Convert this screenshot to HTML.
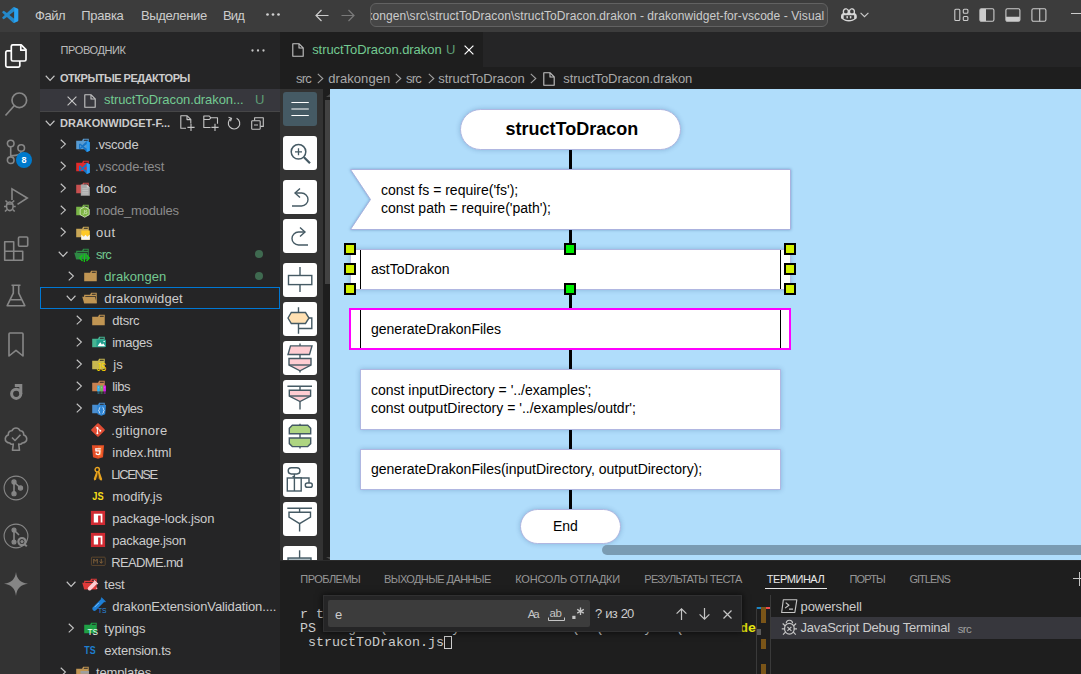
<!DOCTYPE html>
<html lang="ru">
<head>
<meta charset="utf-8">
<title>structToDracon.drakon - drakonwidget-for-vscode - Visual Studio Code</title>
<style>
*{box-sizing:border-box;margin:0;padding:0}
html,body{width:1081px;height:674px;overflow:hidden;background:#1e1e1e}
body{position:relative;font-family:"Liberation Sans",sans-serif;font-size:13px;color:#cccccc}
.abs{position:absolute}
.t{position:absolute;white-space:nowrap}
svg{position:absolute;overflow:visible}
#titlebar{left:0;top:0;width:1081px;height:32px;background:#3c3c3c;overflow:hidden}
#cmd{left:370px;top:3px;width:458px;height:24px;border:1px solid #626262;border-radius:6px;background:#464646;overflow:hidden}
#activity{left:0;top:32px;width:40px;height:642px;background:#333333}
#activity svg{fill:none;stroke:#878787}
#sidebar{left:40px;top:32px;width:240px;height:642px;background:#252526;overflow:hidden}
#tabs{left:280px;top:32px;width:801px;height:35px;background:#252526}
#tab{left:0;top:0;width:203px;height:35px;background:#1e1e1e}
#crumbs{left:280px;top:67px;width:801px;height:22px;background:#1e1e1e}
#toolbar{left:280px;top:89px;width:43px;height:471px;background:#333333;overflow:hidden}
.tb{position:absolute;left:3px;width:34px;height:34px;background:#ffffff;border-radius:3px}
.tb svg{left:0;top:0;fill:none;stroke:#455a64;stroke-width:1.4}
#vscroll{left:323px;top:89px;width:7px;height:471px;background:#1e1e1e}
#canvas{left:330px;top:89px;width:751px;height:471px;background:#b0ddfb;overflow:hidden}
.box{position:absolute;background:#fff;border:1px solid #b0b7e1;box-shadow:0 0 5px rgba(0,50,110,.24)}
.vl{position:absolute;background:#000;width:3px;left:239px}
.h{position:absolute;width:12px;height:12px;border:2px solid #000;background:#d2f000}
.hg{background:#00f000}
#panel{left:280px;top:560px;width:801px;height:114px;background:#1e1e1e;overflow:hidden}
.mono{font-family:"Liberation Mono",monospace}
</style>
</head>
<body>
<div id="titlebar" class="abs">
<svg style="left:2px;top:6.900px" width="16.400" height="16" viewBox="0 0 100 100"><path d="M96.500 10.800 75.900.9a6.200 6.200 0 0 0-7.100 1.200L29.400 38 12.200 25a4.200 4.200 0 0 0-5.300.2L1.400 30.200a4.200 4.200 0 0 0 0 6.200L16.300 50 1.400 63.600a4.200 4.200 0 0 0 0 6.200l5.500 5a4.200 4.200 0 0 0 5.300.2L29.400 62l39.400 35.900a6.200 6.200 0 0 0 7.100 1.200l20.600-9.900A6.200 6.200 0 0 0 100 83.600V16.400a6.200 6.200 0 0 0-3.500-5.600zM75 72.700 45.100 50 75 27.300z" fill="#2489ca"/><path d="M75.900.9 96.500 10.800A6.200 6.200 0 0 1 100 16.400V83.600a6.200 6.200 0 0 1-3.500 5.600L75.900 99.100A6.200 6.200 0 0 1 75 99z" fill="#29a3f2"/></svg>
<span class="t" style="left:35px;top:4.5px;line-height:22px;font-size:13px;color:#cccccc;letter-spacing:-0.458px;">Файл</span>
<span class="t" style="left:81.3px;top:4.5px;line-height:22px;font-size:13px;color:#cccccc;letter-spacing:-0.277px;">Правка</span>
<span class="t" style="left:141px;top:4.5px;line-height:22px;font-size:13px;color:#cccccc;letter-spacing:-0.332px;">Выделение</span>
<span class="t" style="left:223px;top:4.5px;line-height:22px;font-size:13px;color:#cccccc;letter-spacing:-0.816px;">Вид</span>
<svg style="left:265.500px;top:12.800px" width="14" height="3" viewBox="0 0 14 3"><circle cx="1.500" cy="1.500" r="1.350" fill="#d0d0d0"/><circle cx="7" cy="1.500" r="1.350" fill="#d0d0d0"/><circle cx="12.500" cy="1.500" r="1.350" fill="#d0d0d0"/></svg>
<svg style="left:315px;top:9px" width="14" height="13" viewBox="0 0 14 13" fill="none" stroke="#cccccc" stroke-width="1.2"><path d="M13.5 6.5H1.2M6.5 1 1 6.5 6.5 12"/></svg>
<svg style="left:341px;top:9px" width="14" height="13" viewBox="0 0 14 13" fill="none" stroke="#7a7a7a" stroke-width="1.2"><path d="M0.5 6.5h12.3M7.5 1 13 6.5 7.5 12"/></svg>
<div id="cmd" class="abs">
<span class="t" style="left:-4.6px;top:0.7px;line-height:22px;font-size:12px;color:#cccccc;letter-spacing:0.07px;">kongen\src\structToDracon\structToDracon.drakon - drakonwidget-for-vscode - Visual Studio Code</span>
</div>
<svg style="left:839.600px;top:7.300px" width="17.800" height="15.200" viewBox="0 0 16 14" preserveAspectRatio="none"><path d="M3 2.2C3.8 1 5.6 0.9 6.6 1.5 7.3 1.9 7.6 2.6 8 2.6s.7-.7 1.4-1.1c1-.6 2.8-.5 3.6.7.7 1 .6 2.300.4 3.300 1 .7 1.700 1.700 1.700 2.800v1.500c0 .4-.2.800-.5 1C12.700 12.200 10.500 13.300 8 13.300S3.300 12.200 1.400 10.800c-.3-.2-.5-.6-.5-1V8.300c0-1.100.7-2.100 1.700-2.800C2.400 4.500 2.300 3.200 3 2.200z" fill="#d7d7d7"/><path d="M3.300 7.500h9.400v3.300c-1.300.7-3 1.200-4.700 1.200s-3.400-.5-4.700-1.200z" fill="#3c3c3c"/><rect x="5.800" y="8.200" width="1.300" height="2.300" rx=".6" fill="#d7d7d7"/><rect x="8.900" y="8.200" width="1.300" height="2.300" rx=".6" fill="#d7d7d7"/><path d="M4 2.900c.5-.7 1.700-.7 2.300-.3.500.4.700 1.200.600 2-.1.800-.7 1.200-1.600 1.200-1 0-1.500-.3-1.600-1-.1-.700 0-1.400.3-1.900zM12 2.900c-.5-.7-1.700-.7-2.300-.3-.5.4-.7 1.200-.6 2 .1.800.7 1.200 1.600 1.200 1 0 1.500-.3 1.600-1 .1-.700 0-1.400-.3-1.900z" fill="#3c3c3c"/></svg>
<svg style="left:860px;top:12.300px" width="9" height="6" viewBox="0 0 9 6" fill="none" stroke="#cccccc" stroke-width="1.1"><path d="M0.600.8 4.500 4.700 8.400.8"/></svg>
<svg style="left:954px;top:8px" width="15" height="14" viewBox="0 0 15 14" fill="none" stroke="#cccccc" stroke-width="1.1"><rect x=".8" y="1.200" width="5" height="11.300" rx="1"/><rect x="9.300" y="1.200" width="4.600" height="4" rx="1"/><rect x="9.300" y="8.500" width="4.600" height="4" rx="1"/></svg>
<svg style="left:979px;top:8px" width="16" height="14" viewBox="0 0 16 14"><rect x=".9" y=".8" width="14" height="12.400" rx="1.500" fill="none" stroke="#cccccc" stroke-width="1.1"/><path d="M1 2.300a1.400 1.400 0 0 1 1.400-1.400H7v12.200H2.400A1.400 1.400 0 0 1 1 11.700z" fill="#cccccc"/></svg>
<svg style="left:1005px;top:8px" width="16" height="14" viewBox="0 0 16 14"><rect x=".9" y=".8" width="14" height="12.400" rx="1.500" fill="none" stroke="#cccccc" stroke-width="1.1"/><path d="M1 8.800h13.800v2.900a1.400 1.400 0 0 1-1.400 1.400H2.400A1.400 1.400 0 0 1 1 11.700z" fill="#cccccc"/></svg>
<svg style="left:1031px;top:8px" width="16" height="14" viewBox="0 0 16 14" fill="none" stroke="#cccccc" stroke-width="1.1"><rect x=".9" y=".8" width="14" height="12.400" rx="1.500"/><path d="M8.700.8v12.400"/></svg>
<div class="abs" style="left:1071px;top:13px;width:10px;height:1px;background:#cccccc"></div>
</div>
<div id="activity" class="abs">
<svg style="left:4px;top:11px" width="24" height="26" viewBox="0 0 24 26" stroke-width="1.700" stroke-linejoin="round"><path d="M8.800 1.800h8.400l4.800 4.800V16.500a1.500 1.500 0 0 1-1.500 1.500H8.800a1.500 1.500 0 0 1-1.500-1.500V3.300a1.500 1.500 0 0 1 1.500-1.500z" style="stroke:#fff"/><path d="M16.800 2.200v5h5" style="stroke:#fff"/><path d="M7.300 7.900H3.300a1.500 1.500 0 0 0-1.500 1.500v13.200a1.500 1.500 0 0 0 1.500 1.500h11a1.500 1.500 0 0 0 1.500-1.500V18" style="stroke:#fff"/></svg>
<svg style="left:4px;top:59px" width="25" height="26" viewBox="0 0 25 26" stroke-width="1.700"><circle cx="15.300" cy="9.300" r="7.300"/><path d="M10.200 14.800 1.500 24.500"/></svg>
<svg style="left:4px;top:104px" width="28" height="28" viewBox="0 0 28 28" stroke-width="1.600"><circle cx="6.700" cy="7.500" r="3.300"/><circle cx="17.200" cy="12" r="3.300"/><circle cx="6.700" cy="24.200" r="3.300"/><path d="M6.700 10.800v10.100M17.200 15.300c0 3.500-4 4-10.500 4.500"/></svg>
<div class="abs" style="left:16px;top:120px;width:16px;height:16px;border-radius:8px;background:#007acc"></div>
<span class="t" style="left:21.5px;top:120.3px;line-height:16px;font-size:9px;color:#ffffff;font-weight:bold;">8</span>
<svg style="left:3px;top:155px" width="26" height="26" viewBox="0 0 26 26" stroke-width="1.600"><path d="M9 13V1.800L24.300 11 14.500 17.300"/><ellipse cx="6.800" cy="19.300" rx="3.300" ry="4.300"/><path d="M3.500 17h6.600M4.500 15.500 2.500 13.500M9.200 15.500l2-2M3.500 19.500H1M10.200 19.500h2.500M4 22.500 2 24.500M9.700 22.500l2 2"/></svg>
<svg style="left:3px;top:203px" width="26" height="26" viewBox="0 0 26 26" stroke-width="1.600" stroke-linejoin="round"><path d="M1.700 6.700h9v9.500h9v9H1.700zM1.700 16.200h9M10.700 16.200v9"/><rect x="15.500" y="2" width="9.200" height="9.200" rx="1"/></svg>
<svg style="left:6px;top:252px" width="20" height="23" viewBox="0 0 20 23" stroke-width="1.600" stroke-linejoin="round"><path d="M5.500 1.200h9M7.300 1.200v8L1.200 21.700h17.600L12.700 9.200v-8M4.200 15.700h11.600"/></svg>
<svg style="left:8px;top:300px" width="16" height="25" viewBox="0 0 16 25" stroke-width="1.600" stroke-linejoin="round"><path d="M1 2a1 1 0 0 1 1-1h12a1 1 0 0 1 1 1v22L8 18.300 1 24z"/></svg>
<svg style="left:9px;top:351px" width="14" height="18" viewBox="0 0 14 18" stroke-width="3"><path d="M5.800 2.400h7.500M11.800 1v10" stroke-linecap="butt"/><circle cx="7.200" cy="10.800" r="4.600"/></svg>
<svg style="left:4px;top:395px" width="24" height="25" viewBox="0 0 24 25" stroke-width="1.600" stroke-linejoin="round"><path d="M9.300 17c-1 .6-2.800.3-3.500-1C3 16 1 14 1.300 11.500 1.500 9.500 3 8.300 4.300 8 4 5 6 3.500 8 3.700 9 1.500 11 1 12 1s3 .5 4 2.700c2-.2 4 1.300 3.700 4.300 1.300.3 2.800 1.500 3 3.500.3 2.500-1.700 4.500-4.500 4.500-.7 1.300-2.500 1.600-3.500 1l.8 6.300H8.500z"/><path d="M8 10.500l3 3 5.500-5.800"/></svg>
<svg style="left:3px;top:443px" width="26" height="26" viewBox="0 0 26 26" stroke-width="1.100"><circle cx="13" cy="13" r="11.900"/><g fill="#858585"><circle cx="11" cy="7" r="2.100"/><circle cx="17.500" cy="13" r="2.100"/><circle cx="11" cy="18.700" r="2.100"/></g><path d="M11 7v11.700M11 7l6.500 6" stroke-width="1.600"/></svg>
<svg style="left:3px;top:491px" width="26" height="26" viewBox="0 0 26 26" stroke-width="1.100"><circle cx="13" cy="13" r="11.900"/><g fill="#858585"><circle cx="11" cy="7" r="2"/><circle cx="11" cy="19" r="2"/></g><path d="M11 7v12M11 7l5 5" stroke-width="1.600"/><circle cx="19" cy="18.600" r="3.600" stroke-width="2.200" fill="#333"/><circle cx="19" cy="18.600" r="1.600" fill="#858585" stroke="none"/><path d="M21.800 21.400l2 2" stroke-width="2"/></svg>
<svg style="left:4px;top:540px" width="24" height="24" viewBox="0 0 24 24"><path d="M12 0c.8 7 4.500 11 12 11.700C16.500 12.500 12.800 16.500 12 24 11.200 16.500 7.500 12.500 0 11.700 7.500 11 11.200 7 12 0z" fill="#858585" stroke="none"/></svg>
</div>
<div id="sidebar" class="abs">
<span class="t" style="left:20.5px;top:7px;line-height:22px;font-size:11px;color:#bbbbbb;letter-spacing:-0.393px;">ПРОВОДНИК</span>
<svg style="left:211px;top:16.500px" width="14" height="3" viewBox="0 0 14 3"><circle cx="1.500" cy="1.500" r="1.150" fill="#c5c5c5"/><circle cx="7" cy="1.500" r="1.150" fill="#c5c5c5"/><circle cx="12.500" cy="1.500" r="1.150" fill="#c5c5c5"/></svg>
<svg style="left:5px;top:43px" width="10.200" height="6.500" viewBox="0 0 11 7" fill="none" stroke="#c5c5c5" stroke-width="1.200"><path d="M.8.800 5.500 5.800 10.200.8"/></svg>
<span class="t" style="left:20px;top:35px;line-height:22px;font-size:11px;color:#cccccc;font-weight:bold;letter-spacing:-0.486px;">ОТКРЫТЫЕ РЕДАКТОРЫ</span>
<div class="abs" style="left:0;top:57px;width:240px;height:22px;background:#37373d"></div>
<svg style="left:27px;top:63.500px" width="10" height="10" viewBox="0 0 10 10" fill="none" stroke="#c5c5c5" stroke-width="1.150"><path d="M.6.600l8.800 8.800M9.400.600.600 9.400"/></svg>
<svg style="left:43.5px;top:61.5px" width="12" height="14" viewBox="0 0 12 14" fill="none" stroke="#c5c5c5" stroke-width="1.100" stroke-linejoin="round"><path d="M.8.800h6.400l4 4v8.400H.8z"/><path d="M7 .9v4.100h4.100"/></svg>
<span class="t" style="left:64px;top:57px;line-height:22px;font-size:13px;color:#73c991;letter-spacing:-0.087px;">structToDracon.drakon...</span>
<span class="t" style="left:215px;top:57px;line-height:22px;font-size:13px;color:#5d9c74;letter-spacing:-1.000px;">U</span>
<div class="abs" style="left:0;top:79px;width:240px;height:1px;background:#464647"></div>
<svg style="left:5px;top:88px" width="10.200" height="6.500" viewBox="0 0 11 7" fill="none" stroke="#c5c5c5" stroke-width="1.200"><path d="M.8.800 5.500 5.800 10.200.8"/></svg>
<span class="t" style="left:20px;top:79.5px;line-height:22px;font-size:11px;color:#cccccc;font-weight:bold;letter-spacing:0.004px;">DRAKONWIDGET-F...</span>
<svg style="left:140px;top:83px" width="15" height="16" viewBox="0 0 15 16" fill="none" stroke="#c5c5c5" stroke-width="1.100" stroke-linejoin="round"><path d="M6 13.300H.8V.8h6.400l3.600 3.600v4"/><path d="M7 .9v3.700h3.700M11 8.800v7.200M7.400 12.400h7.200"/></svg>
<svg style="left:163px;top:83px" width="16" height="16" viewBox="0 0 16 16" fill="none" stroke="#c5c5c5" stroke-width="1.100" stroke-linejoin="round"><path d="M7.500 12.500H.8V1h5.500l1.500 1.800h6.700v6"/><path d="M.8 4.500h5.500l1.500-1.700M12 8.800v7.200M8.400 12.400h7.200"/></svg>
<svg style="left:186.700px;top:84px" width="14" height="14" viewBox="0 0 14 14" fill="none" stroke="#c5c5c5" stroke-width="1.150"><path d="M4.300 2.300A5.700 5.700 0 1 0 9.600 2.200"/><path d="M1.500 1.300l3 1-1 3"/></svg>
<svg style="left:211.300px;top:84.500px" width="13" height="13" viewBox="0 0 13 13" fill="none" stroke="#c5c5c5" stroke-width="1.100" stroke-linejoin="round"><rect x=".7" y="3.800" width="8.500" height="8.500" rx=".8"/><path d="M3.600 3.500V.7h8.700v8.700H9.500M3 8h4"/></svg>
<svg style="left:19.8px;top:107px" width="6.500" height="10.200" viewBox="0 0 7 11" fill="none" stroke="#c5c5c5" stroke-width="1.200"><path d="M.8.800 5.800 5.500.8 10.200"/></svg>
<svg style="left:34px;top:104px" width="16" height="16" viewBox="0 0 32 32"><path fill-rule="evenodd" d="M27.500 5.500H18.200L16.100 9.700H4.400V26.500H29.500V5.500zm0 4.200H19.300l1.100-2.200h7.100z" fill="#589bd2"/><g transform="translate(9.600 9.600) scale(.224)"><path d="M71 1 32 40 12 24 2 29v42l10 5 20-16 39 39 27-11V12zM12 62V38l13 12zm60 10L43 50l29-22z" fill="#1673c5"/><path d="M71 1l27 11v76L71 99z" fill="#2a9df4"/></g></svg>
<span class="t" style="left:55px;top:101.6px;line-height:22px;font-size:13px;color:#cccccc;letter-spacing:-0.195px;">.vscode</span>
<svg style="left:19.8px;top:129px" width="6.500" height="10.200" viewBox="0 0 7 11" fill="none" stroke="#c5c5c5" stroke-width="1.200"><path d="M.8.800 5.800 5.500.8 10.200"/></svg>
<svg style="left:34px;top:126px" width="16" height="16" viewBox="0 0 32 32"><path fill-rule="evenodd" d="M27.500 5.500H18.200L16.100 9.700H4.400V26.500H29.500V5.500zm0 4.200H19.300l1.100-2.200h7.100z" fill="#e02a2a"/><g transform="translate(9.600 9.600) scale(.224)"><path d="M71 1 32 40 12 24 2 29v42l10 5 20-16 39 39 27-11V12zM12 62V38l13 12zm60 10L43 50l29-22z" fill="#1673c5"/><path d="M71 1l27 11v76L71 99z" fill="#2a9df4"/></g></svg>
<span class="t" style="left:55px;top:123.6px;line-height:22px;font-size:13px;color:#8c8c8c;letter-spacing:-0.061px;">.vscode-test</span>
<svg style="left:19.8px;top:151px" width="6.500" height="10.200" viewBox="0 0 7 11" fill="none" stroke="#c5c5c5" stroke-width="1.200"><path d="M.8.800 5.800 5.500.8 10.200"/></svg>
<svg style="left:34px;top:148px" width="16" height="16" viewBox="0 0 32 32"><path fill-rule="evenodd" d="M27.500 5.500H18.200L16.100 9.700H4.400V26.500H29.500V5.500zm0 4.200H19.300l1.100-2.200h7.100z" fill="#c85050"/><path d="M13.600 8.800h12l6 6v16.800H13.600z" fill="#a9a9a9"/><path d="M25.600 8.800v6h6z" fill="#d0d0d0"/><path d="M16.500 17.500h12M16.500 21h12M16.500 24.500h12M16.500 28h12" stroke="#c9c9c9" stroke-width="1.500"/></svg>
<span class="t" style="left:56px;top:145.6px;line-height:22px;font-size:13px;color:#cccccc;letter-spacing:-0.230px;">doc</span>
<svg style="left:19.8px;top:173px" width="6.500" height="10.200" viewBox="0 0 7 11" fill="none" stroke="#c5c5c5" stroke-width="1.200"><path d="M.8.800 5.800 5.500.8 10.200"/></svg>
<svg style="left:34px;top:170px" width="16" height="16" viewBox="0 0 32 32"><path fill-rule="evenodd" d="M27.500 5.500H18.200L16.100 9.700H4.400V26.500H29.500V5.500zm0 4.200H19.300l1.100-2.200h7.100z" fill="#7ab648"/><path d="M21.400 9.500 30.500 14.700v10.600l-9.100 5.200-9.100-5.200V14.700z" fill="#7cb342" stroke="#e3f0d3" stroke-width="1.500"/><path d="M17.500 23.500c1 1.100 3.300 1 3.300-.8V16M26.300 17.600c-2.300-1.200-4.200.2-2.500 1.700 1.500 1 3.300 1.300 2.300 3.200-1 1.200-3 .8-3.800-.2" stroke="#e3f0d3" stroke-width="1.300" fill="none"/></svg>
<span class="t" style="left:56px;top:167.6px;line-height:22px;font-size:13px;color:#8c8c8c;letter-spacing:-0.208px;">node_modules</span>
<svg style="left:19.8px;top:195px" width="6.500" height="10.200" viewBox="0 0 7 11" fill="none" stroke="#c5c5c5" stroke-width="1.200"><path d="M.8.800 5.800 5.500.8 10.200"/></svg>
<svg style="left:34px;top:192px" width="16" height="16" viewBox="0 0 32 32"><path fill-rule="evenodd" d="M27.500 5.500H18.200L16.100 9.700H4.400V26.500H29.500V5.500zm0 4.200H19.300l1.100-2.200h7.100z" fill="#c8a656"/><path d="M14.600 13h17v18.500h-17z" fill="#ffca28"/><path d="M14.600 31.500V21l5 4.500 3.500-4 3.500 4 5-4.500v10.500z" fill="#f5f5f5"/></svg>
<span class="t" style="left:56px;top:189.6px;line-height:22px;font-size:13px;color:#cccccc;letter-spacing:0.520px;">out</span>
<svg style="left:17.7px;top:219.3px" width="10.200" height="6.500" viewBox="0 0 11 7" fill="none" stroke="#c5c5c5" stroke-width="1.200"><path d="M.8.800 5.500 5.800 10.200.8"/></svg>
<svg style="left:34px;top:214px" width="16" height="16" viewBox="0 0 32 32"><path fill-rule="evenodd" d="M27.400 5.500H18.200L16.100 9.700H4.300V26.500H29.500V5.500zm0 18.700H6.600V11.800H27.400zm0-14.500H19.200l1-2.100h7.200z" fill="#2f8a45"/><path d="M25.700 13.700H.5L4.300 26.500H29.500z" fill="#2f8a45"/><path d="M17 18 11.500 24l5.500 6M25 18l5.500 6-5.500 6M21.200 15.500l-.6 16.500" stroke="#14c814" stroke-width="2.500" fill="none"/></svg>
<span class="t" style="left:56px;top:211.6px;line-height:22px;font-size:13px;color:#73c991;letter-spacing:-0.815px;">src</span>
<div class="abs" style="left:215px;top:218px;width:8px;height:8px;border-radius:4px;background:#3f6a50"></div>
<svg style="left:27.8px;top:239px" width="6.500" height="10.200" viewBox="0 0 7 11" fill="none" stroke="#c5c5c5" stroke-width="1.200"><path d="M.8.800 5.800 5.500.8 10.200"/></svg>
<svg style="left:42px;top:236px" width="16" height="16" viewBox="0 0 32 32"><path fill-rule="evenodd" d="M27.500 5.500H18.200L16.100 9.700H4.400V26.500H29.500V5.500zm0 4.200H19.300l1.100-2.200h7.100z" fill="#c09553"/></svg>
<span class="t" style="left:64.3px;top:233.6px;line-height:22px;font-size:13px;color:#73c991;letter-spacing:0.061px;">drakongen</span>
<div class="abs" style="left:215px;top:240px;width:8px;height:8px;border-radius:4px;background:#3f6a50"></div>
<div class="abs" style="left:0;top:255px;width:240px;height:22px;border:1px solid #0078d4"></div>
<svg style="left:25.7px;top:263.3px" width="10.200" height="6.500" viewBox="0 0 11 7" fill="none" stroke="#c5c5c5" stroke-width="1.200"><path d="M.8.800 5.500 5.800 10.200.8"/></svg>
<svg style="left:42px;top:258px" width="16" height="16" viewBox="0 0 32 32"><path fill-rule="evenodd" d="M27.400 5.500H18.200L16.100 9.700H4.300V26.500H29.500V5.500zm0 18.700H6.600V11.800H27.400zm0-14.500H19.200l1-2.100h7.200z" fill="#c09553"/><path d="M25.700 13.700H.5L4.300 26.500H29.500z" fill="#c09553"/></svg>
<span class="t" style="left:64.3px;top:255.6px;line-height:22px;font-size:13px;color:#cccccc;letter-spacing:0.099px;">drakonwidget</span>
<svg style="left:35.8px;top:283px" width="6.500" height="10.200" viewBox="0 0 7 11" fill="none" stroke="#c5c5c5" stroke-width="1.200"><path d="M.8.800 5.800 5.500.8 10.200"/></svg>
<svg style="left:50px;top:280px" width="16" height="16" viewBox="0 0 32 32"><path fill-rule="evenodd" d="M27.500 5.500H18.200L16.100 9.700H4.400V26.500H29.500V5.500zm0 4.200H19.300l1.100-2.200h7.100z" fill="#c09553"/></svg>
<span class="t" style="left:72.3px;top:277.6px;line-height:22px;font-size:13px;color:#cccccc;letter-spacing:-0.218px;">dtsrc</span>
<svg style="left:35.8px;top:305px" width="6.500" height="10.200" viewBox="0 0 7 11" fill="none" stroke="#c5c5c5" stroke-width="1.200"><path d="M.8.800 5.800 5.500.8 10.200"/></svg>
<svg style="left:50px;top:302px" width="16" height="16" viewBox="0 0 32 32"><path fill-rule="evenodd" d="M27.500 5.500H18.200L16.100 9.700H4.400V26.500H29.500V5.500zm0 4.200H19.300l1.100-2.200h7.100z" fill="#45b592"/><rect x="13" y="11.500" width="19" height="14.500" fill="#1f9d8b"/><path d="M15 24.500 20.500 16.500l3.500 5 2.300-2.800 4.200 5.800z" fill="#ffffff"/><circle cx="28.300" cy="14.800" r="1.500" fill="#ffffff"/></svg>
<span class="t" style="left:72.3px;top:299.6px;line-height:22px;font-size:13px;color:#cccccc;letter-spacing:-0.361px;">images</span>
<svg style="left:35.8px;top:327px" width="6.500" height="10.200" viewBox="0 0 7 11" fill="none" stroke="#c5c5c5" stroke-width="1.200"><path d="M.8.800 5.800 5.500.8 10.200"/></svg>
<svg style="left:50px;top:324px" width="16" height="16" viewBox="0 0 32 32"><path fill-rule="evenodd" d="M27.500 5.500H18.200L16.100 9.700H4.400V26.500H29.500V5.500zm0 4.200H19.300l1.100-2.200h7.100z" fill="#c8b850"/><text x="13.500" y="30.500" font-family="Liberation Sans,sans-serif" font-size="20" fill="#ffd600" textLength="19" lengthAdjust="spacingAndGlyphs">JS</text></svg>
<span class="t" style="left:73.3px;top:321.6px;line-height:22px;font-size:13px;color:#cccccc;">js</span>
<svg style="left:35.8px;top:349px" width="6.500" height="10.200" viewBox="0 0 7 11" fill="none" stroke="#c5c5c5" stroke-width="1.200"><path d="M.8.800 5.800 5.500.8 10.200"/></svg>
<svg style="left:50px;top:346px" width="16" height="16" viewBox="0 0 32 32"><path fill-rule="evenodd" d="M27.500 5.500H18.200L16.100 9.700H4.400V26.500H29.500V5.500zm0 4.200H19.300l1.100-2.200h7.100z" fill="#c88050"/><rect x="14.500" y="15" width="5" height="12" fill="#29b6f6"/><rect x="20.700" y="15" width="5" height="12" fill="#5cbf60"/><rect x="26.900" y="15" width="5" height="12" fill="#d81bf0"/><path d="M15 30h4" stroke="#29b6f6" stroke-width="1.600"/><path d="M21.200 30h4" stroke="#5cbf60" stroke-width="1.600"/><path d="M27.400 30h4" stroke="#d81bf0" stroke-width="1.600"/><path d="M17 17.500v3M23.200 17.500v3M29.400 17.500v3" stroke="#fff" stroke-opacity=".45" stroke-width="1.200"/></svg>
<span class="t" style="left:72.3px;top:343.6px;line-height:22px;font-size:13px;color:#cccccc;letter-spacing:-0.435px;">libs</span>
<svg style="left:35.8px;top:371px" width="6.500" height="10.200" viewBox="0 0 7 11" fill="none" stroke="#c5c5c5" stroke-width="1.200"><path d="M.8.800 5.800 5.500.8 10.200"/></svg>
<svg style="left:50px;top:368px" width="16" height="16" viewBox="0 0 32 32"><path fill-rule="evenodd" d="M27.500 5.500H18.200L16.100 9.700H4.400V26.500H29.500V5.500zm0 4.200H19.300l1.100-2.200h7.100z" fill="#4a8ed0"/><path d="M13.500 10h18.500l-1.700 18.500-7.600 3-7.500-3z" fill="#2f86d6"/><path d="M20.500 14.500c-2.600 0-1.300 5.400-3.300 6.300 2 .9.700 6.300 3.300 6.300M25 14.500c2.600 0 1.300 5.400 3.300 6.300-2 .9-.7 6.300-3.300 6.300" stroke="#e8f2fc" stroke-width="1.700" fill="none"/></svg>
<span class="t" style="left:72.3px;top:365.6px;line-height:22px;font-size:13px;color:#cccccc;letter-spacing:-0.486px;">styles</span>
<svg style="left:50px;top:390px" width="16" height="16" viewBox="0 0 32 32"><rect x="5.800" y="5.800" width="20.400" height="20.400" rx="2" transform="rotate(45 16 16)" fill="#e04c33"/><path d="M12.500 9.500 20 17M14.800 12v10M20 17" stroke="#fff" stroke-width="2" fill="none"/><circle cx="14.800" cy="22.500" r="2" fill="#fff"/><circle cx="20.500" cy="17.500" r="2" fill="#fff"/><circle cx="14.800" cy="11.800" r="2" fill="#fff"/></svg>
<span class="t" style="left:71.3px;top:387.6px;line-height:22px;font-size:13px;color:#cccccc;letter-spacing:0.261px;">.gitignore</span>
<svg style="left:50px;top:412px" width="16" height="16" viewBox="0 0 32 32"><path d="M3.800 2.500h24.400l-2.200 23.800L16 29.300l-10-3z" fill="#e44d26"/><path d="M16 4.500v22.400l7.600-2.300 1.800-20.100z" fill="#f16529"/><path d="M21.800 8.500H10.200l.6 6.300h7.800l-.4 4.300-2.200.7-2.200-.7-.15-1.700h-2.500l.3 3.700 4.550 1.400 4.550-1.400.8-8.800h-8.300l-.15-1.500h8.700z" fill="#fff"/></svg>
<span class="t" style="left:72.3px;top:409.6px;line-height:22px;font-size:13px;color:#cccccc;letter-spacing:-0.007px;">index.html</span>
<svg style="left:50px;top:434px" width="16" height="16" viewBox="0 0 32 32"><circle cx="14.500" cy="7.500" r="4.300" fill="none" stroke="#e8a420" stroke-width="3"/><path d="M12.800 11 7.500 25.500l1 3.500 3.500-1.500 4-15zM15.500 11.500 19 27l3.500 2.500 2-3L19 11z" fill="#e8a420"/><path d="M14.800 12.500l2 13" stroke="#a86a00" stroke-width="1.400"/></svg>
<span class="t" style="left:71.3px;top:431.6px;line-height:22px;font-size:13px;color:#cccccc;letter-spacing:-1.443px;">LICENSE</span>
<svg style="left:50px;top:456px" width="16" height="16" viewBox="0 0 32 32"><text x="4.600" y="23.800" font-family="Liberation Sans,sans-serif" font-weight="bold" font-size="22.600" fill="#f5de19" textLength="22.600" lengthAdjust="spacingAndGlyphs">JS</text></svg>
<span class="t" style="left:72.3px;top:453.6px;line-height:22px;font-size:13px;color:#cccccc;letter-spacing:-0.053px;">modify.js</span>
<svg style="left:50px;top:478px" width="16" height="16" viewBox="0 0 32 32"><rect x="1.800" y="1.800" width="28.400" height="28.200" fill="#d02a32"/><path d="M7.600 7.600h17.200v17.200h-3.400V11h-5.200v13.800H7.600z" fill="#fff"/></svg>
<span class="t" style="left:72.3px;top:475.6px;line-height:22px;font-size:13px;color:#cccccc;letter-spacing:-0.120px;">package-lock.json</span>
<svg style="left:50px;top:500px" width="16" height="16" viewBox="0 0 32 32"><rect x="1.800" y="1.800" width="28.400" height="28.200" fill="#d02a32"/><path d="M7.600 7.600h17.200v17.200h-3.400V11h-5.200v13.800H7.600z" fill="#fff"/></svg>
<span class="t" style="left:72.3px;top:497.6px;line-height:22px;font-size:13px;color:#cccccc;letter-spacing:-0.262px;">package.json</span>
<svg style="left:50px;top:522px" width="16" height="16" viewBox="0 0 32 32"><rect x="2.800" y="6.300" width="27.600" height="16.500" rx="1.500" fill="none" stroke="#6b4f2e" stroke-width="1.600"/><path d="M7.500 19v-9l3.500 4.500 3.500-4.500v9M22.500 10v8M19.300 15l3.200 3.700 3.200-3.700" fill="none" stroke="#80603a" stroke-width="2"/></svg>
<span class="t" style="left:71.3px;top:519.6px;line-height:22px;font-size:13px;color:#cccccc;letter-spacing:-0.657px;">README.md</span>
<svg style="left:25.7px;top:549.3px" width="10.200" height="6.500" viewBox="0 0 11 7" fill="none" stroke="#c5c5c5" stroke-width="1.200"><path d="M.8.800 5.500 5.800 10.200.8"/></svg>
<svg style="left:42px;top:544px" width="16" height="16" viewBox="0 0 32 32"><path fill-rule="evenodd" d="M27.400 5.500H18.200L16.100 9.700H4.300V26.500H29.500V5.500zm0 18.700H6.600V11.800H27.400zm0-14.500H19.200l1-2.100h7.200z" fill="#e03a3a"/><path d="M25.700 13.700H.5L4.300 26.500H29.500z" fill="#e03a3a"/><g transform="rotate(45 20 20)"><path d="M16.500 9.500h7.500v17.500a3.750 3.750 0 0 1-7.500 0z" fill="#ffcdd2"/><path d="M15 9h10.500" stroke="#ffcdd2" stroke-width="2.200"/></g><circle cx="29.500" cy="24.500" r="1.300" fill="#ffcdd2"/></svg>
<span class="t" style="left:64.3px;top:541.6px;line-height:22px;font-size:13px;color:#cccccc;letter-spacing:-0.247px;">test</span>
<svg style="left:50px;top:566px" width="16" height="16" viewBox="0 0 32 32"><g transform="rotate(45 14 16)"><path d="M10 -1h8.500v24.500a4.250 4.250 0 0 1-8.500 0z" fill="#1e7fd6"/><path d="M8.300 -1.500h12" stroke="#1e7fd6" stroke-width="2.400"/><path d="M12.300 9v12" stroke="#8cc8ff" stroke-width="1.600"/></g><text x="16" y="30.500" font-family="Liberation Sans,sans-serif" font-size="13.500" fill="#2a8ce0">TS</text></svg>
<span class="t" style="left:72.3px;top:563.6px;line-height:22px;font-size:13px;color:#cccccc;letter-spacing:-0.122px;">drakonExtensionValidation....</span>
<svg style="left:27.8px;top:591px" width="6.500" height="10.200" viewBox="0 0 7 11" fill="none" stroke="#c5c5c5" stroke-width="1.200"><path d="M.8.800 5.800 5.500.8 10.200"/></svg>
<svg style="left:42px;top:588px" width="16" height="16" viewBox="0 0 32 32"><path fill-rule="evenodd" d="M27.500 5.500H18.200L16.100 9.700H4.400V26.500H29.500V5.500zm0 4.200H19.300l1.100-2.200h7.100z" fill="#1fa045"/><text x="11" y="30" font-family="Liberation Sans,sans-serif" font-size="16.500" fill="#f0fff4">TS</text></svg>
<span class="t" style="left:64.3px;top:585.6px;line-height:22px;font-size:13px;color:#cccccc;letter-spacing:-0.015px;">typings</span>
<svg style="left:42px;top:610px" width="16" height="16" viewBox="0 0 32 32"><text x="4.400" y="24.200" font-family="Liberation Sans,sans-serif" font-weight="bold" font-size="21.500" fill="#1e7fd0" textLength="22.800" lengthAdjust="spacingAndGlyphs">TS</text></svg>
<span class="t" style="left:64.3px;top:607.6px;line-height:22px;font-size:13px;color:#cccccc;letter-spacing:-0.234px;">extension.ts</span>
<svg style="left:19.8px;top:635px" width="6.500" height="10.200" viewBox="0 0 7 11" fill="none" stroke="#c5c5c5" stroke-width="1.200"><path d="M.8.800 5.800 5.500.8 10.200"/></svg>
<svg style="left:34px;top:632px" width="16" height="16" viewBox="0 0 32 32"><path fill-rule="evenodd" d="M27.500 5.500H18.200L16.100 9.700H4.400V26.500H29.500V5.500zm0 4.200H19.300l1.100-2.200h7.100z" fill="#c09553"/><rect x="13" y="14" width="17" height="5.500" fill="#9e9e9e"/><rect x="13" y="21" width="7" height="10" fill="#9e9e9e"/><rect x="21.500" y="21" width="8.500" height="10" fill="#bdbdbd"/></svg>
<span class="t" style="left:56px;top:629.6px;line-height:22px;font-size:13px;color:#cccccc;letter-spacing:-0.145px;">templates</span>
</div>
<div id="tabs" class="abs">
<div id="tab" class="abs"></div>
<svg style="left:12px;top:11px" width="12" height="14" viewBox="0 0 12 14" fill="none" stroke="#c5c5c5" stroke-width="1.100" stroke-linejoin="round"><path d="M.8.800h6.400l4 4v8.400H.8z"/><path d="M7 .9v4.100h4.100"/></svg>
<span class="t" style="left:32.2px;top:6.5px;line-height:22px;font-size:13px;color:#73c991;letter-spacing:-0.068px;">structToDracon.drakon</span>
<span class="t" style="left:166px;top:6.5px;line-height:22px;font-size:13px;color:#5d9c74;letter-spacing:-0.500px;">U</span>
<svg style="left:183.800px;top:12.500px" width="10" height="10" viewBox="0 0 10 10" fill="none" stroke="#ffffff" stroke-width="1.250"><path d="M.6.600l8.800 8.800M9.400.600.600 9.400"/></svg>
</div>
<div id="crumbs" class="abs">
<span class="t" style="left:16px;top:0.6px;line-height:22px;font-size:13px;color:#a9a9a9;letter-spacing:-0.815px;">src</span>
<svg style="left:37px;top:6px" width="7" height="11" viewBox="0 0 7 11" fill="none" stroke="#a0a0a0" stroke-width="1.100"><path d="M.8.800 5.800 5.500.8 10.200"/></svg>
<span class="t" style="left:48.2px;top:0.6px;line-height:22px;font-size:13px;color:#a9a9a9;letter-spacing:0.074px;">drakongen</span>
<svg style="left:115.2px;top:6px" width="7" height="11" viewBox="0 0 7 11" fill="none" stroke="#a0a0a0" stroke-width="1.100"><path d="M.8.800 5.800 5.500.8 10.200"/></svg>
<span class="t" style="left:126px;top:0.6px;line-height:22px;font-size:13px;color:#a9a9a9;letter-spacing:-0.815px;">src</span>
<svg style="left:147.5px;top:6px" width="7" height="11" viewBox="0 0 7 11" fill="none" stroke="#a0a0a0" stroke-width="1.100"><path d="M.8.800 5.800 5.500.8 10.200"/></svg>
<span class="t" style="left:158.3px;top:0.6px;line-height:22px;font-size:13px;color:#a9a9a9;letter-spacing:-0.076px;">structToDracon</span>
<svg style="left:250px;top:6px" width="7" height="11" viewBox="0 0 7 11" fill="none" stroke="#a0a0a0" stroke-width="1.100"><path d="M.8.800 5.800 5.500.8 10.200"/></svg>
<svg style="left:263.3px;top:4.5px" width="12" height="14" viewBox="0 0 12 14" fill="none" stroke="#c5c5c5" stroke-width="1.100" stroke-linejoin="round"><path d="M.8.800h6.400l4 4v8.400H.8z"/><path d="M7 .9v4.100h4.100"/></svg>
<span class="t" style="left:283.3px;top:0.6px;line-height:22px;font-size:13px;color:#a9a9a9;letter-spacing:-0.088px;">structToDracon.drakon</span>
</div>
<div id="toolbar" class="abs">
<div class="tb" style="top:3px;background:#455a64"><svg width="34" height="34" viewBox="0 0 34 34"><path d="M8.400 10.500h17.400M8.400 17h17.400M8.400 23.500h17.400" stroke="#ffffff" stroke-width="1"/></svg></div>
<div class="tb" style="top:47px;background:#ffffff"><svg width="34" height="34" viewBox="0 0 34 34"><circle cx="15.500" cy="15.800" r="7.300" stroke-width="1.500"/><path d="M15.500 12.300v7M12 15.800h7" stroke-width="1.300"/><path d="M21 21.300 27 27.300" stroke-width="2.200"/></svg></div>
<div class="tb" style="top:91px;background:#ffffff"><svg width="34" height="34" viewBox="0 0 34 34"><path d="M9 26h9.500a6.500 6.500 0 0 0 0-13H12"/><path d="M17 8.500 12 13l5 4.500"/></svg></div>
<div class="tb" style="top:130px;background:#ffffff"><svg width="34" height="34" viewBox="0 0 34 34"><path d="M25 26H15.500a6.500 6.500 0 0 1 0-13H22"/><path d="M17 8.500 22 13l-5 4.500"/></svg></div>
<div class="tb" style="top:174px;background:#ffffff"><svg width="34" height="34" viewBox="0 0 34 34"><path d="M17 4v8.500M17 21.600V29"/><rect x="5.500" y="12.500" width="23.300" height="9.100" fill="#fff"/></svg></div>
<div class="tb" style="top:213px;background:#ffffff"><svg width="34" height="34" viewBox="0 0 34 34"><path d="M15.500 5.300v26.500M26 16h2.800v10.500H15.500"/><path d="M5 16 8.300 10.500h14.200L26 16l-3.500 5.500H8.300z" fill="#ffe0b2"/></svg></div>
<div class="tb" style="top:252px;background:#ffffff"><svg width="34" height="34" viewBox="0 0 34 34"><path d="M17 2.500v29"/><path d="M7.500 4.900h21.500l-2.500 8.600H5z" fill="#ffcdd2"/><path d="M6 17.500h22v6.500L17 29.800 6 24z" fill="#ffcdd2"/><path d="M6 24h22"/></svg></div>
<div class="tb" style="top:291px;background:#ffffff"><svg width="34" height="34" viewBox="0 0 34 34"><path d="M4.400 6.300H29M17 6.300v4M17 21.500v8"/><path d="M6.300 10.200h21.300v5.800L17 21.500 6.300 16z" fill="#ffcdd2"/><path d="M6.300 16h21.300"/></svg></div>
<div class="tb" style="top:330px;background:#ffffff"><svg width="34" height="34" viewBox="0 0 34 34"><path d="M17 4.800v24.600"/><path d="M9.300 6.200h15.400l3 3v5.600H6.300V9.200z" fill="#aed581"/><path d="M6.300 19h21.400v5.600l-3 3H9.300l-3-3z" fill="#aed581"/></svg></div>
<div class="tb" style="top:374px;background:#ffffff"><svg width="34" height="34" viewBox="0 0 34 34"><rect x="5.200" y="4.700" width="11.800" height="6.300" rx="3.150"/><path d="M11.400 11v4M9.600 13.200l1.800 1.800M11.400 15H26v5"/><rect x="4.300" y="15" width="13.900" height="13" fill="#fff"/><path d="M11.400 15v13"/><rect x="22.300" y="20" width="7" height="4.300" rx="2.150"/></svg></div>
<div class="tb" style="top:413px;background:#ffffff"><svg width="34" height="34" viewBox="0 0 34 34"><path d="M4.300 6.200H29M16.600 6.200v4.100M16.600 21.700v7.700"/><path d="M6 10.300h21.500v4.900L16.600 21.700 6 15.200z"/></svg></div>
<div class="tb" style="top:457px;background:#ffffff"><svg width="34" height="34" viewBox="0 0 34 34"><path d="M16.600 4.300V12"/><rect x="5" y="12" width="23" height="9" fill="#b0bec5"/></svg></div>
</div>
<div id="vscroll" class="abs"><div class="abs" style="left:2px;top:11px;width:5px;height:184px;background:#424242"></div><svg style="left:3px;top:5px" width="4" height="3" viewBox="0 0 4 3"><path d="M0 3 4 3 4 0z" fill="#484848"/></svg><svg style="left:3px;top:467.500px" width="4" height="3" viewBox="0 0 4 3"><path d="M0 0h4v2.500z" fill="#484848"/></svg></div>
<div id="canvas" class="abs">
<div class="abs" style="left:239px;top:60px;width:3px;height:362px;background:#000"></div>
<div class="box" style="left:130px;top:20px;width:221px;height:41px;border-radius:20.500px"></div>
<span class="t" style="left:175.5px;top:27.5px;line-height:24px;font-size:18px;color:#000000;font-weight:bold;">structToDracon</span>
<svg style="left:20px;top:80px;filter:drop-shadow(0 0 1.500px rgba(0,50,110,.35))" width="441" height="61" viewBox="0 0 441 61"><path d="M.5.500H440.500V60.500H.5L20.500 30.500z" fill="#fff" stroke="#aab2de" stroke-width="1"/></svg>
<span class="t" style="left:51px;top:92px;line-height:18px;font-size:14px;color:#000000;">const fs = require('fs');</span>
<span class="t" style="left:51px;top:110px;line-height:18px;font-size:14px;color:#000000;">const path = require('path');</span>
<div class="box" style="left:20px;top:160px;width:441px;height:41px;"></div>
<div class="abs" style="left:30px;top:161px;width:1px;height:39px;background:#000"></div>
<div class="abs" style="left:450px;top:161px;width:1px;height:39px;background:#000"></div>
<span class="t" style="left:41px;top:171px;line-height:18px;font-size:14px;color:#000000;">astToDrakon</span>
<div class="h" style="left:14px;top:154px"></div>
<div class="h" style="left:14px;top:174px"></div>
<div class="h" style="left:14px;top:194px"></div>
<div class="h" style="left:454px;top:154px"></div>
<div class="h" style="left:454px;top:174px"></div>
<div class="h" style="left:454px;top:194px"></div>
<div class="h hg" style="left:234px;top:154px"></div>
<div class="h hg" style="left:234px;top:194px"></div>
<div class="abs" style="left:19px;top:219px;width:442px;height:42px;border:2px solid #ff00ff;background:#fff"></div>
<div class="abs" style="left:30px;top:221px;width:1px;height:38px;background:#000"></div>
<div class="abs" style="left:450px;top:221px;width:1px;height:38px;background:#000"></div>
<span class="t" style="left:41px;top:231px;line-height:18px;font-size:14px;color:#000000;">generateDrakonFiles</span>
<div class="box" style="left:30px;top:280px;width:421px;height:61px;"></div>
<span class="t" style="left:41px;top:292px;line-height:18px;font-size:14px;color:#000000;">const inputDirectory = '../examples';</span>
<span class="t" style="left:41px;top:310px;line-height:18px;font-size:14px;color:#000000;">const outputDirectory = '../examples/outdr';</span>
<div class="box" style="left:30px;top:360px;width:421px;height:41px;"></div>
<span class="t" style="left:41px;top:371px;line-height:18px;font-size:14px;color:#000000;">generateDrakonFiles(inputDirectory, outputDirectory);</span>
<div class="box" style="left:190px;top:420px;width:101px;height:35px;border-radius:17.500px"></div>
<span class="t" style="left:223px;top:428.2px;line-height:18px;font-size:14px;color:#000000;">End</span>
<div class="abs" style="left:272px;top:456px;width:500px;height:10px;border-radius:5px;background:#7a9bb2"></div>
</div>
<div id="panel" class="abs">
<div class="abs" style="left:0;top:0;width:801px;height:1px;background:#2b2b2b"></div>
<span class="t" style="left:20.3px;top:8px;line-height:22px;font-size:11px;color:#969696;letter-spacing:-0.542px;">ПРОБЛЕМЫ</span>
<span class="t" style="left:104px;top:8px;line-height:22px;font-size:11px;color:#969696;letter-spacing:-0.593px;">ВЫХОДНЫЕ ДАННЫЕ</span>
<span class="t" style="left:235.3px;top:8px;line-height:22px;font-size:11px;color:#969696;letter-spacing:-0.230px;">КОНСОЛЬ ОТЛАДКИ</span>
<span class="t" style="left:364.3px;top:8px;line-height:22px;font-size:11px;color:#969696;letter-spacing:-0.710px;">РЕЗУЛЬТАТЫ ТЕСТА</span>
<span class="t" style="left:486.8px;top:8px;line-height:22px;font-size:11px;color:#e7e7e7;letter-spacing:-0.452px;">ТЕРМИНАЛ</span>
<div class="abs" style="left:485px;top:28px;width:62px;height:1px;background:#e7e7e7"></div>
<span class="t" style="left:569.5px;top:8px;line-height:22px;font-size:11px;color:#969696;letter-spacing:-0.881px;">ПОРТЫ</span>
<span class="t" style="left:629.4px;top:8px;line-height:22px;font-size:11px;color:#969696;letter-spacing:-0.955px;">GITLENS</span>
<svg style="left:793px;top:12px" width="14" height="14" viewBox="0 0 14 14" fill="none" stroke="#c5c5c5" stroke-width="1"><path d="M6.500 0v14M0 6.500h14"/></svg>
<span class="t" style="left:20px;top:48.45px;line-height:14px;font-size:13.33px;color:#cccccc;font-family:'Liberation Mono',monospace;white-space:pre;">r to the drakon file and try again</span>
<span class="t" style="left:20px;top:62.45px;line-height:14px;font-size:13.33px;color:#cccccc;font-family:'Liberation Mono',monospace;white-space:pre;">PS C:\gser(\admin\syurce\drakonwid(et(for-vycod(\src&gt;</span>
<span class="t" style="left:444px;top:62.45px;line-height:14px;font-size:13.33px;color:#e5e510;font-weight:bold;font-family:'Liberation Mono',monospace;white-space:pre;">node</span>
<span class="t" style="left:20px;top:76.45px;line-height:14px;font-size:13.33px;color:#cccccc;font-family:'Liberation Mono',monospace;white-space:pre;"> structToDrakon.js</span>
<div class="abs" style="left:164px;top:76px;width:8px;height:13px;border:1px solid #cccccc"></div>
<div class="abs" style="left:476px;top:47px;width:1px;height:70px;background:#3a3a3a"></div>
<div class="abs" style="left:477px;top:47px;width:4px;height:2px;background:#1a85c4"></div>
<div class="abs" style="left:486px;top:47px;width:4px;height:2px;background:#f14c4c"></div>
<div class="abs" style="left:481px;top:47px;width:5px;height:16px;background:#7a5518"></div>
<div class="abs" style="left:481px;top:79px;width:5px;height:10px;background:#7a5518"></div>
<div class="abs" style="left:481px;top:104px;width:5px;height:10px;background:#7a5518"></div>
<div class="abs" style="left:477px;top:69px;width:4px;height:6px;background:#5a5a5a"></div>
<div class="abs" style="left:490px;top:35px;width:1px;height:80px;background:#3a3a3a"></div>
<div class="abs" style="left:491px;top:57px;width:310px;height:22px;background:#37373d"></div>
<svg style="left:500.79999999999995px;top:38.799999999999955px" width="16.500" height="14.300" viewBox="0 0 15 13" fill="none" stroke="#c5c5c5" stroke-width="1.050" stroke-linejoin="round"><path d="M2.100.700h12.300l-1.800 11.600H.6z"/><path d="M4.300 3.300 7.200 5.700 3.700 8.300M7.300 9.200h3.600"/></svg>
<span class="t" style="left:520.6px;top:35.5px;line-height:22px;font-size:13px;color:#cccccc;letter-spacing:-0.095px;">powershell</span>
<svg style="left:500.5px;top:59.299999999999955px" width="16.800" height="16.800" viewBox="0 0 15 15" fill="none" stroke="#c5c5c5" stroke-width="1.050"><path d="M4.700 3.900a2.800 2.800 0 0 1 5.600 0"/><rect x="3.200" y="3.900" width="8.600" height="9.600" rx="4.300"/><path d="M5.700 7l3.600 3.600M9.300 7 5.700 10.600M3.700 8.800H.7M11.300 8.800h3M3.900 6.200 1.500 4M11.100 6.200 13.500 4M4.200 11.500 1.800 14M10.800 11.500l2.400 2.500"/></svg>
<span class="t" style="left:520.6px;top:57px;line-height:22px;font-size:13px;color:#cccccc;letter-spacing:-0.227px;">JavaScript Debug Terminal</span>
<span class="t" style="left:677.7px;top:57.5px;line-height:22px;font-size:11.5px;color:#a0a0a0;letter-spacing:-0.690px;">src</span>
<div class="abs" style="left:43px;top:35px;width:419px;height:37px;background:#252526;box-shadow:0 0 6px 1px rgba(0,0,0,.55);border:1px solid #303031"></div>
<div class="abs" style="left:48px;top:40px;width:262px;height:27px;background:#3c3c3c;border-radius:2px"></div>
<span class="t" style="left:55px;top:43.5px;line-height:22px;font-size:13px;color:#cccccc;letter-spacing:-0.500px;">e</span>
<span class="t" style="left:247.8px;top:42.5px;line-height:22px;font-size:11.5px;color:#c5c5c5;letter-spacing:-2.170px;">Aa</span>
<span class="t" style="left:269.5px;top:41.5px;line-height:22px;font-size:11.5px;color:#c5c5c5;letter-spacing:-0.396px;">ab</span>
<svg style="left:267.5px;top:57px" width="17" height="4" viewBox="0 0 17 4" fill="none" stroke="#c5c5c5" stroke-width="1"><path d="M.5.500v3h16v-3"/></svg>
<svg style="left:292px;top:47px" width="13" height="13" viewBox="0 0 13 13" fill="none" stroke="#c5c5c5" stroke-width="1.300"><rect x=".3" y="8.800" width="3.200" height="3.200" fill="#c5c5c5" stroke="none"/><path d="M8.500.500v7.500M5.200 2.400l6.600 3.700M11.800 2.400 5.200 6.100"/></svg>
<span class="t" style="left:315px;top:42.8px;line-height:22px;font-size:13px;color:#cccccc;letter-spacing:-0.800px;word-spacing:1px;">? из 20</span>
<svg style="left:396px;top:48px" width="11" height="12" viewBox="0 0 11 12" fill="none" stroke="#c5c5c5" stroke-width="1.200"><path d="M5.500 12V1M.6 5.700 5.500.8l4.900 4.900"/></svg>
<svg style="left:419px;top:48px" width="11" height="12" viewBox="0 0 11 12" fill="none" stroke="#c5c5c5" stroke-width="1.200"><path d="M5.500 0v11M.6 6.300l4.900 4.900 4.900-4.900"/></svg>
<svg style="left:442.5px;top:49.5px" width="9" height="9" viewBox="0 0 9 9" fill="none" stroke="#c5c5c5" stroke-width="1.200"><path d="M.5.500l8 8M8.500.500l-8 8"/></svg>
</div>
</body>
</html>
